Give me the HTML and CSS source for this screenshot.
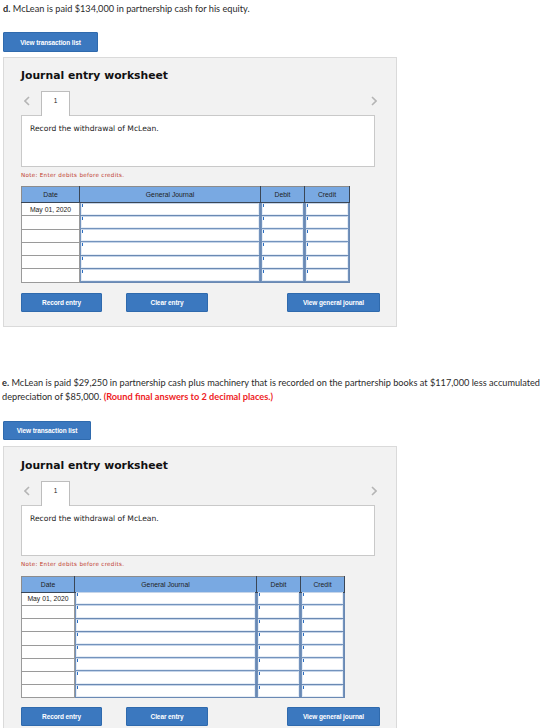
FILE: index.html
```html
<!DOCTYPE html>
<html lang="en">
<head>
<meta charset="utf-8">
<title>Journal entry worksheet</title>
<link rel="stylesheet" href="styles.css">
</head>
<body>

<p class="prompt"><b>d.</b> McLean is paid $134,000 in partnership cash for his equity.</p>
<button class="btn btn-list btn-list-d">View transaction list</button>

<section class="panel panel-d">
  <h2 class="panel-title">Journal entry worksheet</h2>
  <div class="tabs">
    <svg class="arrow arrow-prev" width="6" height="10" viewBox="0 0 6 10"><path d="M5 1 L1 5 L5 9" fill="none" stroke="#b5b5b5" stroke-width="1.6"/></svg>
    <div class="tab">1</div>
    <svg class="arrow arrow-next" width="6" height="10" viewBox="0 0 6 10"><path d="M1 1 L5 5 L1 9" fill="none" stroke="#b5b5b5" stroke-width="1.6"/></svg>
  </div>
  <div class="instruction">Record the withdrawal of McLean.</div>
  <p class="note">Note: Enter debits before credits.</p>
  <table class="journal journal-d">
    <colgroup><col class="c-date"><col class="c-gj"><col class="c-dr"><col class="c-cr"></colgroup>
    <thead><tr><th>Date</th><th>General Journal</th><th>Debit</th><th>Credit</th></tr></thead>
    <tbody>
      <tr><td class="date">May 01, 2020</td><td class="in"><div></div></td><td class="in"><div></div></td><td class="in"><div></div></td></tr>
      <tr><td class="date"></td><td class="in"><div></div></td><td class="in"><div></div></td><td class="in"><div></div></td></tr>
      <tr><td class="date"></td><td class="in"><div></div></td><td class="in"><div></div></td><td class="in"><div></div></td></tr>
      <tr><td class="date"></td><td class="in"><div></div></td><td class="in"><div></div></td><td class="in"><div></div></td></tr>
      <tr><td class="date"></td><td class="in"><div></div></td><td class="in"><div></div></td><td class="in"><div></div></td></tr>
      <tr><td class="date"></td><td class="in"><div></div></td><td class="in"><div></div></td><td class="in"><div></div></td></tr>
    </tbody>
  </table>
  <div class="actions">
    <button class="btn btn-record">Record entry</button>
    <button class="btn btn-clear">Clear entry</button>
    <button class="btn btn-view">View general journal</button>
  </div>
</section>

<p class="prompt prompt-e"><span class="line"><b>e.</b> McLean is paid $29,250 in partnership cash plus machinery that is recorded on the partnership books at $117,000 less accumulated</span><br><span class="line">depreciation of $85,000. <strong class="warn">(Round final answers to 2 decimal places.)</strong></span></p>
<button class="btn btn-list btn-list-e">View transaction list</button>

<section class="panel panel-e">
  <h2 class="panel-title">Journal entry worksheet</h2>
  <div class="tabs">
    <svg class="arrow arrow-prev" width="6" height="10" viewBox="0 0 6 10"><path d="M5 1 L1 5 L5 9" fill="none" stroke="#b5b5b5" stroke-width="1.6"/></svg>
    <div class="tab">1</div>
    <svg class="arrow arrow-next" width="6" height="10" viewBox="0 0 6 10"><path d="M1 1 L5 5 L1 9" fill="none" stroke="#b5b5b5" stroke-width="1.6"/></svg>
  </div>
  <div class="instruction">Record the withdrawal of McLean.</div>
  <p class="note">Note: Enter debits before credits.</p>
  <table class="journal journal-e">
    <colgroup><col class="c-date"><col class="c-gj"><col class="c-dr"><col class="c-cr"></colgroup>
    <thead><tr><th>Date</th><th>General Journal</th><th>Debit</th><th>Credit</th></tr></thead>
    <tbody>
      <tr><td class="date">May 01, 2020</td><td class="in"><div></div></td><td class="in"><div></div></td><td class="in"><div></div></td></tr>
      <tr><td class="date"></td><td class="in"><div></div></td><td class="in"><div></div></td><td class="in"><div></div></td></tr>
      <tr><td class="date"></td><td class="in"><div></div></td><td class="in"><div></div></td><td class="in"><div></div></td></tr>
      <tr><td class="date"></td><td class="in"><div></div></td><td class="in"><div></div></td><td class="in"><div></div></td></tr>
      <tr><td class="date"></td><td class="in"><div></div></td><td class="in"><div></div></td><td class="in"><div></div></td></tr>
      <tr><td class="date"></td><td class="in"><div></div></td><td class="in"><div></div></td><td class="in"><div></div></td></tr>
      <tr><td class="date"></td><td class="in"><div></div></td><td class="in"><div></div></td><td class="in"><div></div></td></tr>
      <tr><td class="date"></td><td class="in"><div></div></td><td class="in"><div></div></td><td class="in"><div></div></td></tr>
    </tbody>
  </table>
  <div class="actions">
    <button class="btn btn-record">Record entry</button>
    <button class="btn btn-clear">Clear entry</button>
    <button class="btn btn-view">View general journal</button>
  </div>
</section>

</body>
</html>
```

FILE: styles.css
```css
* { box-sizing: border-box; }

html, body { background: #fff; }

body {
  margin: 0;
  width: 560px;
  height: 728px;
  overflow: hidden;
  font-family: Lato, "Open Sans", sans-serif;
  color: #2b2b2b;
}

/* question text */
.prompt {
  margin: 0;
  padding: 2px 0 0 3px;
  font-size: 9.2px;
  line-height: 13px;
}
.prompt b { font-weight: 700; }

.prompt-e {
  margin-top: 49px;
  padding: 0 0 0 2px;
  line-height: 14.5px;
  white-space: nowrap;
}
.warn {
  color: #ee1c25;
  font-weight: 700;
}

/* buttons */
.btn {
  display: block;
  height: 19px;
  padding: 0;
  border: 1px solid #2f6aad;
  border-radius: 1px;
  background: #3b78bf;
  color: #fff;
  font-family: "Liberation Sans", Arial, sans-serif;
  font-weight: 700;
  font-size: 6.5px;
  letter-spacing: -0.1px;
  text-align: center;
  cursor: pointer;
}

.btn-list { margin-left: 3px; }
.btn-list-d { width: 95px; height: 20px; margin-top: 17px; }
.btn-list-e { width: 88px; height: 19px; margin-top: 16px; }

/* worksheet panel */
.panel {
  width: 394px;
  margin-left: 3px;
  padding: 11px 0 14px 17px;
  background: #f2f2f2;
  border: 1px solid #dadada;
}
.panel-d { margin-top: 5px; }
.panel-e { margin-top: 6px; padding-top: 12px; }

.panel-title {
  margin: 0;
  font-family: "DejaVu Sans", Verdana, sans-serif;
  font-weight: 700;
  font-size: 10.8px;
  line-height: 14px;
  color: #111;
}

.tabs {
  display: flex;
  align-items: center;
  width: 354px;
  height: 24px;
  margin-top: 8px;
}

.arrow { flex: none; }
.arrow-prev { margin-left: 3px; margin-bottom: 4px; }
.arrow-next { margin-left: auto; margin-right: -2px; margin-bottom: 4px; }

.tab {
  position: relative;
  z-index: 1;
  width: 29px;
  height: 25px;
  margin-left: 11px;
  margin-bottom: -1px;
  align-self: flex-start;
  background: #fff;
  border: 1px solid #bdbdbd;
  border-bottom: none;
  font-family: "Liberation Sans", Arial, sans-serif;
  font-size: 6.5px;
  line-height: 17px;
  text-align: center;
  color: #222;
}

.instruction {
  width: 354px;
  height: 52px;
  padding: 7px 0 0 8px;
  background: #fff;
  border: 1px solid #c9c9c9;
  font-family: "DejaVu Sans", Verdana, sans-serif;
  font-size: 7.6px;
  line-height: 12px;
  color: #222;
}
.panel-e .instruction { height: 51px; }

.note {
  margin: 4px 0 0;
  font-family: "DejaVu Sans", Verdana, sans-serif;
  font-size: 5.6px;
  line-height: 8px;
  letter-spacing: 0.3px;
  color: #c0392b;
}

/* journal grid */
.journal {
  margin-top: 7px;
  border-collapse: collapse;
  table-layout: fixed;
  border: 1px solid #8c8c8c;
  font-family: "Liberation Sans", Arial, sans-serif;
  font-size: 6.8px;
  color: #222;
}
.journal-d { width: 328px; }
.journal-e { width: 323px; margin-top: 8px; }

.journal-d .c-date { width: 58px; }
.journal-d .c-gj { width: 181px; }
.journal-d .c-dr { width: 44px; }
.journal-d .c-cr { width: 45px; }

.journal-e .c-date { width: 53px; }
.journal-e .c-gj { width: 182px; }
.journal-e .c-dr { width: 44px; }
.journal-e .c-cr { width: 44px; }

.journal th {
  height: 16px;
  padding: 0;
  background: #79a9e2;
  border: 1px solid #3a4656;
  border-top-color: #8c8c8c;
  font-weight: 400;
  text-align: center;
}
.journal th:first-child { border-left-color: #8c8c8c; }

.journal td {
  height: 13.3px;
  padding: 0;
}
.journal-e td { height: 13.2px; }

.journal td.date {
  background: #fff;
  border: 1px solid #9a9a9a;
  text-align: center;
  line-height: 11px;
  white-space: nowrap;
}

.journal td.in {
  background: #7393bd;
  border: 1px solid #6a89b3;
}
.journal td.in div {
  position: relative;
  height: 100%;
  margin: 0 1px 1px 1px;
  background: #fff;
  border: 1px solid #e6edf6;
  border-top-color: #c6d5e9;
}
/* caret mark at the start of each entry field */
.journal td.in div::before {
  content: "";
  position: absolute;
  left: 0;
  top: 0;
  width: 1px;
  height: 3px;
  background: #2d6fc2;
}

/* action buttons */
.actions {
  display: flex;
  margin-top: 10px;
}
.panel-e .actions { margin-top: 9px; }
.btn-record { width: 81px; }
.btn-clear { width: 82px; margin-left: 24px; }
.btn-view { width: 93px; margin-left: 79px; }
```
